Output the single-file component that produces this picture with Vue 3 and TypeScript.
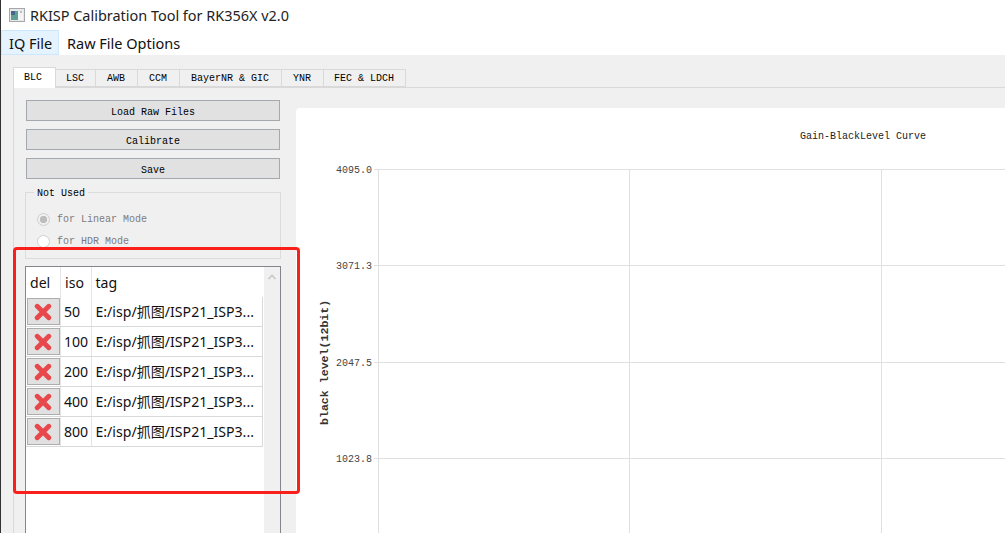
<script setup lang="ts">
const tabs = [
  { label: 'BLC', w: 43 },
  { label: 'LSC', w: 40 },
  { label: 'AWB', w: 42 },
  { label: 'CCM', w: 42 },
  { label: 'BayerNR & GIC', w: 102 },
  { label: 'YNR', w: 42 },
  { label: 'FEC & LDCH', w: 82 },
]
const actions = ['Load Raw Files', 'Calibrate', 'Save']
const isos = [50, 100, 200, 400, 800]
const rows = [
  { y: 169, label: '4095.0' },
  { y: 265, label: '3071.3' },
  { y: 362, label: '2047.5' },
  { y: 458, label: '1023.8' },
]
const chartTop = 108
const chartLeft = 296
</script>

<template>
  <div class="window">
    <header class="titlebar">
      <svg class="app-icon" width="16" height="14" viewBox="0 0 16 14">
        <rect x="0.5" y="0.5" width="15" height="13" fill="#e8e8e8" stroke="#a4a8aa" />
        <rect x="2" y="3" width="7" height="9" fill="#5f9f94" />
        <rect x="2" y="3" width="4" height="4" fill="#45678a" />
        <rect x="9" y="3" width="5" height="9" fill="#f4f4f4" />
        <rect x="11" y="3" width="2" height="2" fill="#b4c2c8" />
      </svg>
      <span class="title">RKISP Calibration Tool for RK356X v2.0</span>
    </header>
    <nav class="menubar">
      <span class="menu menu-active">IQ File</span>
      <span class="menu">Raw File Options</span>
    </nav>
    <main class="content">
      <div class="tabs">
        <span
          v-for="(t, i) in tabs"
          :key="t.label"
          class="tab"
          :class="{ 'tab-active': i === 0 }"
          :style="{ width: t.w + 'px' }"
        >{{ t.label }}</span>
      </div>
      <section class="pane">
        <div class="side">
          <button v-for="a in actions" :key="a" class="action">{{ a }}</button>
          <fieldset class="group">
            <legend>Not Used</legend>
            <label class="radio"><i class="dot dot-on"></i>for Linear Mode</label>
            <label class="radio"><i class="dot"></i>for HDR Mode</label>
          </fieldset>
          <div class="table">
            <div class="table-body">
              <div class="row head">
                <span class="c-del">del</span>
                <span class="c-iso">iso</span>
                <span class="c-tag">tag</span>
              </div>
              <div v-for="iso in isos" :key="iso" class="row item">
                <span class="c-del">
                  <button class="del" aria-label="delete">
                    <svg width="18" height="18" viewBox="0 0 18 18">
                      <path d="M3.2 3.2 L14.8 14.8 M14.8 3.2 L3.2 14.8" stroke="#e8474c" stroke-width="4.8" stroke-linecap="round" fill="none" />
                    </svg>
                  </button>
                </span>
                <span class="c-iso num">{{ iso }}</span>
                <span class="c-tag">E:/isp/抓图/ISP21_ISP3...</span>
              </div>
            </div>
            <div class="scroll">
              <svg width="10" height="6" viewBox="0 0 10 6">
                <path d="M1.5 5 L5 1.5 L8.5 5" stroke="#c8c8c8" stroke-width="1.6" fill="none" />
              </svg>
            </div>
          </div>
        </div>
        <div class="chart">
          <svg class="plot" width="709" height="425" :viewBox="`${chartLeft} ${chartTop} 709 425`">
            <text x="800" y="139" class="chart-title">Gain-BlackLevel Curve</text>
            <g stroke="#e0e0e0" stroke-width="1">
              <line v-for="r in rows" :key="r.y" x1="374" x2="1005" :y1="r.y + 0.5" :y2="r.y + 0.5" />
              <line x1="378.5" x2="378.5" y1="169" y2="533" />
              <line x1="629.5" x2="629.5" y1="169" y2="533" />
              <line x1="881.5" x2="881.5" y1="169" y2="533" />
            </g>
            <text v-for="r in rows" :key="r.label" x="372" :y="r.y + 3.5" text-anchor="end" class="tick">{{ r.label }}</text>
            <text transform="translate(328 425) rotate(-90)" class="axis">black level(12bit)</text>
          </svg>
        </div>
      </section>
    </main>
    <div class="callout"></div>
  </div>
</template>

<style>
html, body { margin: 0; padding: 0; overflow: hidden; background: #fff; }
</style>

<style scoped>
.window {
  position: relative;
  width: 1005px;
  height: 533px;
  display: flex;
  flex-direction: column;
  overflow: hidden;
  background: #fff;
  font-family: "Noto Sans", "Noto Sans CJK SC", sans-serif;
  color: #111;
  box-shadow: inset 1px 0 0 #333;
}
.titlebar {
  height: 30px;
  flex: none;
  display: flex;
  align-items: center;
  padding-left: 9px;
}
.app-icon { margin-right: 5px; }
.title { font-size: 14.45px; color: #222; white-space: nowrap; }
.menubar {
  height: 25px;
  flex: none;
  display: flex;
  padding-left: 1px;
}
.menu {
  font-size: 14.5px;
  padding: 0 7px;
  color: #111;
  box-sizing: border-box;
  border: 1px solid transparent;
  line-height: 24px;
  white-space: nowrap;
}
.menu-active {
  width: 58px;
  background: #e5f3ff;
  border-color: #cce8ff;
}
.content {
  flex: 1;
  min-height: 0;
  display: flex;
  flex-direction: column;
  background: #f0f0f0;
  padding: 12px 0 0 13px;
  box-shadow: inset 1px 0 0 #333;
}
.tabs {
  display: flex;
  height: 20px;
  flex: none;
  position: relative;
  z-index: 1;
  font-family: "Liberation Mono", monospace;
  font-size: 10px;
}
.tab {
  box-sizing: border-box;
  height: 18px;
  margin-top: 2px;
  padding-right: 1px;
  text-align: center;
  line-height: 18px;
  background: #f0f0f0;
  border: 1px solid #d9d9d9;
  border-left: 0;
  color: #000;
}
.tab-active {
  height: 21px;
  margin-top: 0;
  padding-right: 3px;
  background: #fff;
  border-left: 1px solid #d9d9d9;
  border-bottom: 0;
  line-height: 20px;
}
.pane {
  flex: 1;
  min-height: 0;
  display: flex;
  align-items: flex-start;
  border-top: 1px solid #d9d9d9;
  border-left: 1px solid #d9d9d9;
  padding: 12px 0 0 11px;
}
.side {
  width: 256px;
  flex: none;
  display: flex;
  flex-direction: column;
  font-family: "Liberation Mono", monospace;
  font-size: 10px;
}
.action {
  box-sizing: border-box;
  height: 21px;
  margin: 0 1px 8px;
  padding: 3px 0 0;
  background: #e1e1e1;
  border: 1px solid #a3a9ae;
  font: inherit;
  color: #000;
}
.group {
  box-sizing: border-box;
  height: 74px;
  margin: -2px 0 7px;
  padding: 9px 0 0;
  border: 1px solid #dcdcdc;
  display: flex;
  flex-direction: column;
  min-width: 0;
}
.group legend {
  margin-left: 8px;
  padding: 4px 3px 0;
  color: #000;
  line-height: 10px;
}
.radio {
  display: flex;
  align-items: center;
  height: 22px;
  flex: none;
  padding-left: 11px;
  color: #7c7c7c;
}
.dot {
  box-sizing: border-box;
  width: 13px;
  height: 13px;
  margin-right: 7px;
  border: 1px solid #cfcfcf;
  border-radius: 50%;
  background: #fff;
}
.dot-on {
  background: radial-gradient(circle, #bdbdbd 0 3.4px, #f0f0f0 4px);
}
.table {
  box-sizing: border-box;
  height: 280px;
  flex: none;
  display: flex;
  background: #fff;
  border: 1px solid #85868c;
  font-family: "Noto Sans", "Noto Sans CJK SC", sans-serif;
  font-size: 14.1px;
  color: #111;
}
.table-body {
  width: 237px;
  flex: none;
}
.row {
  display: flex;
  height: 30px;
  box-sizing: border-box;
}
.item {
  border-bottom: 1px solid #d9d9d9;
  border-right: 1px solid #d9d9d9;
}
.row > span {
  display: flex;
  align-items: center;
  box-sizing: border-box;
  white-space: nowrap;
  overflow: hidden;
}
.item > span { padding-bottom: 1px; }
.c-del { width: 35px; padding-left: 4px; border-right: 1px solid #e4e4e4; }
.c-iso { width: 31px; padding-left: 4px; border-right: 1px solid #e4e4e4; }
.c-tag { flex: 1; padding-left: 3.5px; }
.num { padding-left: 3px; }
.item .c-del { padding: 0 0 0 1px; }
.del {
  box-sizing: border-box;
  width: 33px;
  height: 27px;
  padding: 0 1px 0 0;
  display: flex;
  align-items: center;
  justify-content: center;
  background: #e1e1e1;
  border: 1px solid #adadad;
}
.scroll {
  flex: 1;
  background: #f0f0f0;
  display: flex;
  justify-content: center;
  align-items: flex-start;
  padding-top: 7px;
  margin-left: 1px;
}
.chart {
  flex: none;
  width: 709px;
  height: 425px;
  margin: 8px 0 0 15px;
  background: #fff;
  border-radius: 4px 0 0 0;
}
.plot { display: block; }
.chart-title, .tick, .axis { font-family: "Liberation Mono", monospace; }
.chart-title { font-size: 10px; fill: #222; }
.tick { font-size: 10px; fill: #444; }
.axis { font-size: 11.6px; font-weight: 700; fill: #333; }
.callout {
  position: absolute;
  left: 13px;
  top: 247px;
  width: 287px;
  height: 247px;
  box-sizing: border-box;
  border: 3px solid #f9201b;
  border-radius: 4px;
  pointer-events: none;
}
</style>
